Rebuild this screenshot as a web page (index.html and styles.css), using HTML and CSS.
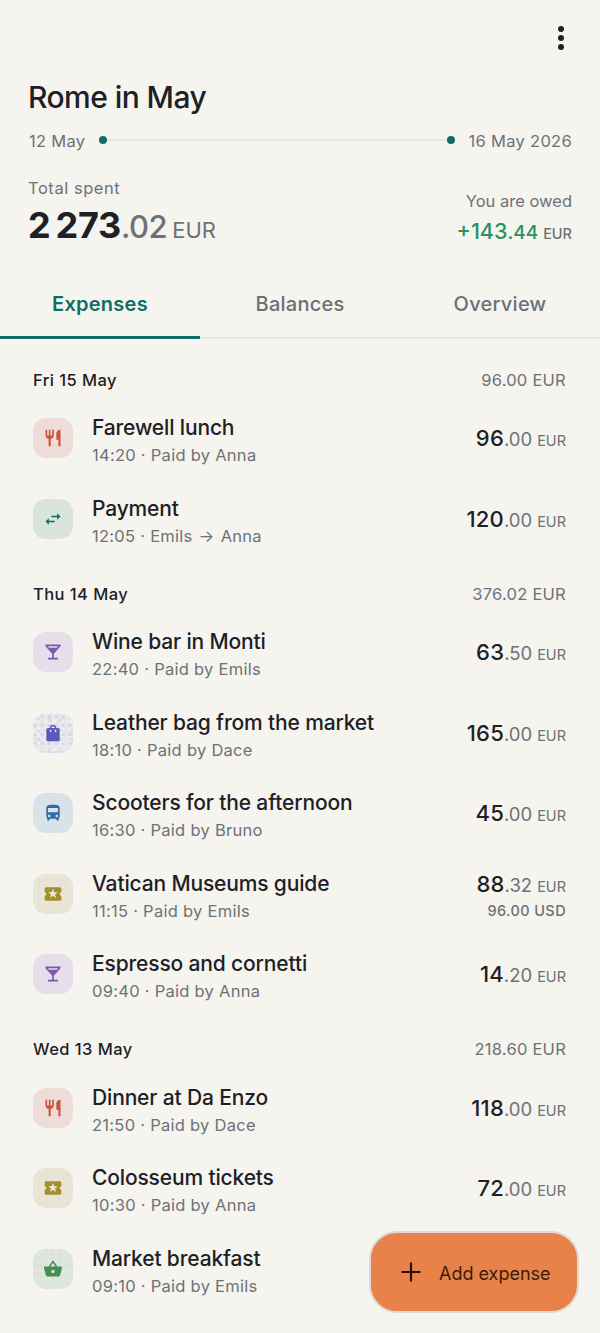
FILE: index.html
```html
<!DOCTYPE html>
<html lang="en">
<head>
<meta charset="utf-8">
<title>Rome in May</title>
<link rel="stylesheet" href="styles.css">
</head>
<body>
<svg class="defs" width="0" height="0" aria-hidden="true">
  <symbol id="i-food" viewBox="0 0 24 24"><path d="M11 9H9V2H7v7H5V2H3v7c0 2.12 1.66 3.84 3.75 3.97V22h2.5v-9.03C11.34 12.84 13 11.12 13 9V2h-2v7zm5-3v8h2.5v8H21V2c-2.76 0-5 2.24-5 4z"/></symbol>
  <symbol id="i-swap" viewBox="0 0 24 24"><path d="M6.99 11L3 15l3.99 4v-3H14v-2H6.99v-3zM21 9l-3.99-4v3H10v2h7.01v3L21 9z"/></symbol>
  <symbol id="i-bar" viewBox="0 0 24 24"><path d="M21 5V3H3v2l8 9v5H6v2h12v-2h-5v-5l8-9zM7.43 7L5.66 5h12.69l-1.78 2H7.43z"/></symbol>
  <symbol id="i-bag" viewBox="0 0 24 24"><path d="M18 6h-2c0-2.21-1.79-4-4-4S8 3.79 8 6H6c-1.1 0-2 .9-2 2v12c0 1.1.9 2 2 2h12c1.1 0 2-.9 2-2V8c0-1.1-.9-2-2-2zm-8 4c0 .55-.45 1-1 1s-1-.45-1-1V8h2v2zm2-6c1.1 0 2 .9 2 2h-4c0-1.1.9-2 2-2zm4 6c0 .55-.45 1-1 1s-1-.45-1-1V8h2v2z"/></symbol>
  <symbol id="i-bus" viewBox="0 0 24 24"><path d="M4 16c0 .88.39 1.67 1 2.22V20c0 .55.45 1 1 1h1c.55 0 1-.45 1-1v-1h8v1c0 .55.45 1 1 1h1c.55 0 1-.45 1-1v-1.78c.61-.55 1-1.34 1-2.22V6c0-3.5-3.58-4-8-4s-8 .5-8 4v10zm3.5 1c-.83 0-1.5-.67-1.5-1.5S6.67 14 7.5 14s1.5.67 1.5 1.5S8.33 17 7.5 17zm9 0c-.83 0-1.5-.67-1.5-1.5s.67-1.5 1.5-1.5 1.5.67 1.5 1.5-.67 1.5-1.5 1.5zm1.5-6H6V6h12v5z"/></symbol>
  <symbol id="i-ticket" viewBox="0 0 24 24"><path d="M20 12c0-1.1.9-2 2-2V6c0-1.1-.9-2-2-2H4c-1.1 0-1.99.9-1.99 2v4c1.1 0 1.99.9 1.99 2s-.89 2-2 2v4c0 1.1.9 2 2 2h16c1.1 0 2-.9 2-2v-4c-1.1 0-2-.9-2-2zm-4.42 4.8L12 14.5l-3.58 2.3 1.08-4.12-3.29-2.69 4.24-.25L12 5.8l1.54 3.95 4.24.25-3.29 2.69 1.09 4.11z"/></symbol>
  <symbol id="i-basket" viewBox="0 0 24 24"><path d="M17.21 9l-4.38-6.56c-.19-.28-.51-.42-.83-.42-.32 0-.64.14-.83.43L6.79 9H2c-.55 0-1 .45-1 1 0 .09.01.18.04.27l2.54 9.27c.23.84 1 1.46 1.92 1.46h13c.92 0 1.69-.62 1.93-1.46l2.54-9.27L23 10c0-.55-.45-1-1-1h-4.79zM9 9l3-4.4L15 9H9zm3 8c-1.1 0-2-.9-2-2s.9-2 2-2 2 .9 2 2-.9 2-2 2z"/></symbol>
</svg>

<div class="page">
  <header class="head">
    <div class="topbar">
      <button class="more" aria-label="More"><span></span><span></span><span></span></button>
    </div>
    <h1 class="title">Rome in May</h1>
    <div class="dates">
      <span>12 May</span>
      <div class="track"></div>
      <span>16 May 2026</span>
    </div>
    <div class="totals">
      <div class="spent">
        <div class="label wide">Total spent</div>
        <div class="big"><b>2 273</b><span class="cents">.02</span><span class="cur">EUR</span></div>
      </div>
      <div class="owed">
        <div class="label">You are owed</div>
        <div class="plus">+143<span class="pc">.44</span><span class="pcur">EUR</span></div>
      </div>
    </div>
  </header>

  <nav class="tabs">
    <div class="tab active">Expenses</div>
    <div class="tab">Balances</div>
    <div class="tab">Overview</div>
  </nav>

  <main class="list">
    <section class="group">
      <div class="ghead"><span class="gday">Fri 15 May</span><span class="gsum">96.00 EUR</span></div>
      <div class="row"><div class="tile t-food"><svg class="ico"><use href="#i-food"/></svg></div><div class="info"><div class="name">Farewell lunch</div><div class="meta">14:20 · Paid by Anna</div></div><div class="amt"><div class="val"><b>96</b><span class="c">.00</span><span class="e">EUR</span></div></div></div>
      <div class="row"><div class="tile t-pay"><svg class="ico"><use href="#i-swap"/></svg></div><div class="info"><div class="name">Payment</div><div class="meta">12:05 · Emils <span class="arrow">→</span> Anna</div></div><div class="amt"><div class="val"><b>120</b><span class="c">.00</span><span class="e">EUR</span></div></div></div>
    </section>

    <section class="group">
      <div class="ghead"><span class="gday">Thu 14 May</span><span class="gsum">376.02 EUR</span></div>
      <div class="row"><div class="tile t-bar"><svg class="ico"><use href="#i-bar"/></svg></div><div class="info"><div class="name">Wine bar in Monti</div><div class="meta">22:40 · Paid by Emils</div></div><div class="amt"><div class="val"><b>63</b><span class="c">.50</span><span class="e">EUR</span></div></div></div>
      <div class="row"><div class="tile t-shop"><svg class="ico"><use href="#i-bag"/></svg></div><div class="info"><div class="name">Leather bag from the market</div><div class="meta">18:10 · Paid by Dace</div></div><div class="amt"><div class="val"><b>165</b><span class="c">.00</span><span class="e">EUR</span></div></div></div>
      <div class="row"><div class="tile t-bus"><svg class="ico"><use href="#i-bus"/></svg></div><div class="info"><div class="name">Scooters for the afternoon</div><div class="meta">16:30 · Paid by Bruno</div></div><div class="amt"><div class="val"><b>45</b><span class="c">.00</span><span class="e">EUR</span></div></div></div>
      <div class="row"><div class="tile t-fun"><svg class="ico"><use href="#i-ticket"/></svg></div><div class="info"><div class="name">Vatican Museums guide</div><div class="meta">11:15 · Paid by Emils</div></div><div class="amt"><div class="val"><b>88</b><span class="c">.32</span><span class="e">EUR</span></div><div class="orig">96.00 USD</div></div></div>
      <div class="row"><div class="tile t-bar"><svg class="ico"><use href="#i-bar"/></svg></div><div class="info"><div class="name">Espresso and cornetti</div><div class="meta">09:40 · Paid by Anna</div></div><div class="amt"><div class="val"><b>14</b><span class="c">.20</span><span class="e">EUR</span></div></div></div>
    </section>

    <section class="group">
      <div class="ghead"><span class="gday">Wed 13 May</span><span class="gsum">218.60 EUR</span></div>
      <div class="row"><div class="tile t-food"><svg class="ico"><use href="#i-food"/></svg></div><div class="info"><div class="name">Dinner at Da Enzo</div><div class="meta">21:50 · Paid by Dace</div></div><div class="amt"><div class="val"><b>118</b><span class="c">.00</span><span class="e">EUR</span></div></div></div>
      <div class="row"><div class="tile t-fun"><svg class="ico"><use href="#i-ticket"/></svg></div><div class="info"><div class="name">Colosseum tickets</div><div class="meta">10:30 · Paid by Anna</div></div><div class="amt"><div class="val"><b>72</b><span class="c">.00</span><span class="e">EUR</span></div></div></div>
      <div class="row"><div class="tile t-groc"><svg class="ico"><use href="#i-basket"/></svg></div><div class="info"><div class="name">Market breakfast</div><div class="meta">09:10 · Paid by Emils</div></div></div>
    </section>
  </main>

  <button class="fab"><svg class="fab-plus" viewBox="0 0 24 24"><path d="M12 2.5v19M2.5 12h19"/></svg><span>Add expense</span></button>
</div>
</body>
</html>
```
FILE: styles.css
```css
* { box-sizing: border-box; }
html, body { margin: 0; padding: 0; }
body {
  background: #f5f4ef;
  color: #1d2025;
  font-family: Inter, "Noto Sans", sans-serif;
  width: 600px;
  height: 1333px;
  overflow: hidden;
}
.defs { position: absolute; }
.page { position: relative; height: 1333px; overflow: hidden; }

.head { padding: 0 28px; }
.topbar { display: flex; justify-content: flex-end; height: 75px; padding-top: 26px; }
.more {
  display: flex; flex-direction: column; justify-content: space-between; align-items: center;
  width: 6px; height: 24px; padding: 0; margin-right: 8px; border: 0; background: none;
}
.more span { width: 6px; height: 6px; border-radius: 50%; background: #1d2025; }

.title { margin: 0; font-size: 30px; line-height: 44px; font-weight: 500; letter-spacing: -0.55px; }

.dates {
  display: flex; align-items: center; gap: 14px;
  margin-top: 10px; height: 24px; padding-left: 1px;
  font-size: 16.5px; color: #6d7277; letter-spacing: 0.3px;
}
.track {
  flex: 1; height: 2px; background: #e6e4dd; position: relative; margin-top: -2px;
}
.track::before, .track::after {
  content: ""; position: absolute; top: -3px; width: 8px; height: 8px; border-radius: 50%; background: #0d6e66;
}
.track::before { left: 0; }
.track::after { right: 0; }

.totals { display: flex; justify-content: space-between; align-items: flex-end; margin-top: 23px; }
.label { font-size: 16.5px; line-height: 24px; color: #6d7277; }
.label.wide { letter-spacing: 0.55px; }
.big { display: flex; align-items: baseline; line-height: 46px; margin-top: 2px; }
.big b { font-size: 36px; font-weight: 700; letter-spacing: -0.3px; word-spacing: -3px; }
.cents { font-size: 31px; color: #6d7277; font-weight: 500; letter-spacing: -0.5px; }
.cur { font-size: 22px; color: #6d7277; margin-left: 5px; }
.owed { text-align: right; }
.plus { font-size: 21.5px; line-height: 36px; color: #2b9160; font-weight: 500; margin-bottom: 1px; }
.pc { font-size: 19px; }
.pcur { font-size: 14.5px; color: #6d7277; margin-left: 5px; }

.tabs { display: flex; height: 64px; margin-top: 22px; border-bottom: 2px solid #e6e4dd; }
.tab {
  flex: 1; display: flex; align-items: center; justify-content: center;
  font-size: 20px; font-weight: 500; color: #6a7079; padding-bottom: 4px; letter-spacing: 0.25px;
  position: relative;
}
.tab.active { color: #0d6e66; font-weight: 600; }
.tab.active::after {
  content: ""; position: absolute; left: 0; right: 0; bottom: -2px; height: 3px; background: #0d6e66;
}

.list { padding: 22px 34px 0 33px; }
.group + .group { margin-top: 16px; }
.ghead { display: flex; justify-content: space-between; align-items: center; height: 37px; }
.gday { font-size: 16.5px; font-weight: 500; letter-spacing: 0.45px; }
.gsum { font-size: 16.5px; color: #6d7277; letter-spacing: 0.25px; }

.row { display: flex; align-items: center; height: 80.5px; }
.tile {
  width: 40px; height: 40px; border-radius: 13px; flex: none;
  display: flex; align-items: center; justify-content: center;
  margin-right: 19px;
}
.ico { width: 20px; height: 20px; fill: currentColor; }
.t-food { background: #eedcd8; color: #c9533c; }
.t-pay { background: #dbe3dd; color: #0d6e66; }
.t-bar { background: #e6deea; color: #7e57b0; }
.t-shop {
  color: #5a58bb;
  background-color: #e9e7ec;
  background-image:
    radial-gradient(circle at 30% 40%, #d8d7e8 0 1.6px, transparent 2px),
    radial-gradient(circle at 70% 20%, #f0eeee 0 1.5px, transparent 2px),
    radial-gradient(circle at 50% 70%, #dbdae9 0 1.8px, transparent 2.2px),
    radial-gradient(circle at 20% 80%, #f0eeee 0 1.3px, transparent 1.8px);
  background-size: 7px 9px, 8px 7px, 11px 10px, 13px 11px;
}
.t-bus { background: #d9e2e8; color: #2f6ba6; }
.t-fun {
  color: #a3902a;
  background-color: #e8e5d6;
  background-image:
    radial-gradient(circle at 30% 40%, #edeadd 0 1px, transparent 1.5px),
    radial-gradient(circle at 70% 70%, #e4e1d0 0 1px, transparent 1.5px);
  background-size: 7px 9px, 9px 8px;
}
.t-groc {
  color: #43914f;
  background-color: #dbe4dd;
  background-image:
    radial-gradient(circle at 30% 40%, #e8e8dc 0 1px, transparent 1.5px),
    radial-gradient(circle at 70% 70%, #e6e8dc 0 1px, transparent 1.5px);
  background-size: 7px 9px, 9px 8px;
}

.info { flex: 1; min-width: 0; padding-top: 4px; }
.name { font-size: 21px; line-height: 30px; font-weight: 500; letter-spacing: -0.15px; }
.meta { font-size: 16.5px; line-height: 24px; color: #6d7277; letter-spacing: 0.27px; }
.arrow { letter-spacing: 1.5px; margin-left: 1px; }
.amt { text-align: right; padding-top: 3px; }
.val { font-size: 18px; line-height: 28px; color: #6d7277; }
.val b { font-size: 22px; font-weight: 500; color: #1d2025; letter-spacing: 0.2px; }
.c { font-size: 18.5px; }
.e { font-size: 14.5px; margin-left: 5px; }
.orig { font-size: 14.5px; line-height: 20px; font-weight: 500; color: #6d7277; letter-spacing: 0.4px; }

.fab {
  position: absolute; left: 369px; top: 1231px; width: 210px; height: 82px;
  display: flex; align-items: center; gap: 16px; padding: 0 0 0 28px;
  background: #e9824a; border: 2px solid #dcdbd6; border-radius: 28px;
  color: #3b1b08; font: 400 18px Inter, sans-serif;
}
.fab span { padding-top: 2px; }
.fab-plus { width: 24px; height: 24px; fill: none; stroke: #2c1206; stroke-width: 2.2; flex: none; }
```
